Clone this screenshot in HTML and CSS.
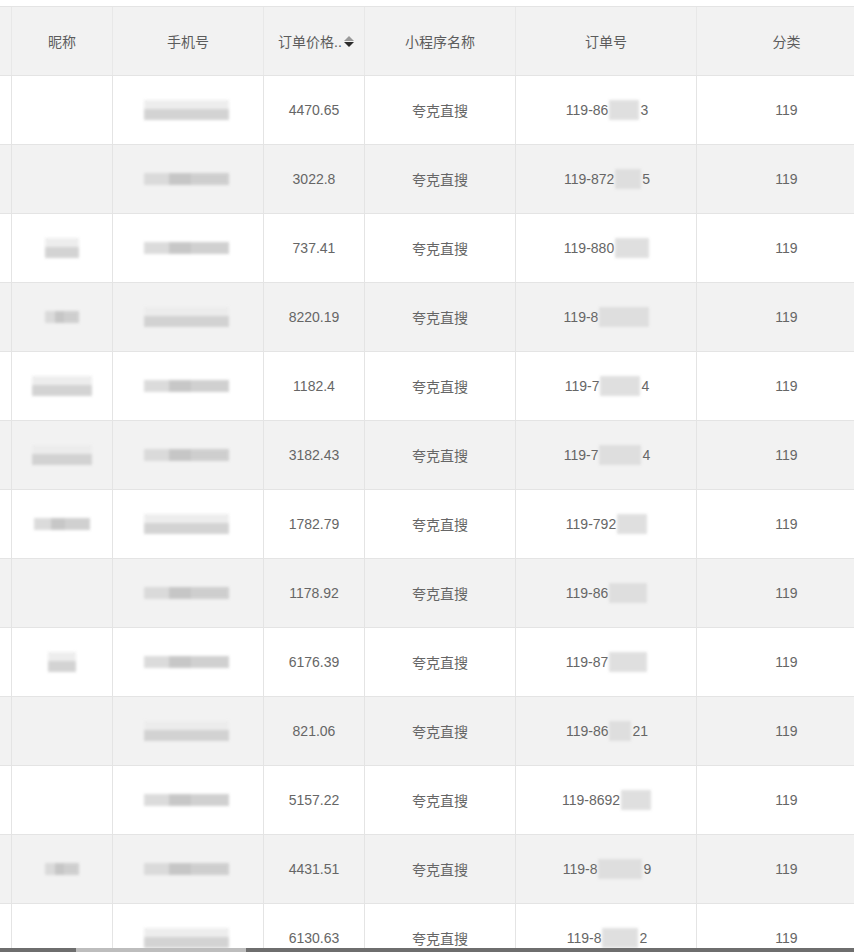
FILE: index.html
```html
<!DOCTYPE html>
<html lang="zh-CN">
<head>
    <meta charset="UTF-8">
    <meta name="viewport" content="width=device-width, initial-scale=1.0">
    <title>订单列表</title>
    <link rel="stylesheet" href="styles.css">
</head>
<body>
    <div class="page">
        <div class="table-wrap">
            <div class="order-table" id="order-table">
                <div class="row head">
                    <div class="cell"></div>
                    <div class="cell">昵称</div>
                    <div class="cell">手机号</div>
                    <div class="cell sortable">
                        <span>订单价格..</span>
                        <span class="sort-icon"><i class="up"></i><i class="down"></i></span>
                    </div>
                    <div class="cell">小程序名称</div>
                    <div class="cell">订单号</div>
                    <div class="cell">分类</div>
                </div>
            </div>
        </div>
        <div class="hscroll"><div class="hscroll-thumb"></div></div>
    </div>

    <script>
        // rows: nickname mask width, price, order prefix, mask width, order suffix
        const orders = [
            { nick: 0,  nickTall: false, price: "4470.65", pre: "119-86",  mask: 30, post: "3" },
            { nick: 0,  nickTall: false, price: "3022.8",  pre: "119-872", mask: 26, post: "5" },
            { nick: 34, nickTall: true,  price: "737.41",  pre: "119-880", mask: 34, post: "" },
            { nick: 34, nickTall: false, price: "8220.19", pre: "119-8",   mask: 50, post: "" },
            { nick: 60, nickTall: true,  price: "1182.4",  pre: "119-7",   mask: 40, post: "4" },
            { nick: 60, nickTall: true,  price: "3182.43", pre: "119-7",   mask: 42, post: "4" },
            { nick: 56, nickTall: false, price: "1782.79", pre: "119-792", mask: 30, post: "" },
            { nick: 0,  nickTall: false, price: "1178.92", pre: "119-86",  mask: 38, post: "" },
            { nick: 28, nickTall: true,  price: "6176.39", pre: "119-87",  mask: 38, post: "" },
            { nick: 0,  nickTall: false, price: "821.06",  pre: "119-86",  mask: 22, post: "21" },
            { nick: 0,  nickTall: false, price: "5157.22", pre: "119-8692",mask: 30, post: "" },
            { nick: 34, nickTall: false, price: "4431.51", pre: "119-8",   mask: 44, post: "9" },
            { nick: 0,  nickTall: false, price: "6130.63", pre: "119-8",   mask: 36, post: "2" }
        ];

        const table = document.getElementById('order-table');

        orders.forEach((o, i) => {
            const row = document.createElement('div');
            row.className = 'row' + (i % 2 === 1 ? ' striped' : '');

            const nickCell = o.nick
                ? `<span class="mask${o.nickTall ? ' tall' : ''}" style="width:${o.nick}px"></span>`
                : '';

            row.innerHTML = `
                <div class="cell"></div>
                <div class="cell">${nickCell}</div>
                <div class="cell"><span class="mask phone${i % 3 === 0 ? ' tall' : ''}"></span></div>
                <div class="cell">${o.price}</div>
                <div class="cell">夸克直搜</div>
                <div class="cell order-no">${o.pre}<span class="mask order" style="width:${o.mask}px"></span>${o.post}</div>
                <div class="cell">119</div>`;
            table.appendChild(row);
        });
    </script>
</body>
</html>
```

FILE: styles.css
```css
:root {
    --text-color: #666666;
    --head-text-color: #5c5c5c;
    --line-color: #e4e4e4;
    --stripe-color: #f2f2f2;
    --head-bg-color: #f2f2f2;
}
html, body { margin: 0; height: 100%; }
body {
    font-family: "Liberation Sans", "Noto Sans CJK SC", sans-serif;
    font-size: 14px;
    color: var(--text-color);
    background-color: #ffffff;
    overflow: hidden;
}
.page { display: flex; flex-direction: column; height: 100vh; }
.table-wrap { flex: 1; overflow: hidden; padding-top: 6px; }
.order-table { margin-left: -48px; width: max-content; border-top: 1px solid var(--line-color); }

.row {
    display: grid;
    grid-template-columns: 60px 101px 151px 101px 151px 181px 180px;
    height: 69px;
    box-sizing: border-box;
    border-bottom: 1px solid var(--line-color);
    background-color: #ffffff;
}
.row.striped { background-color: var(--stripe-color); }
.row.head { height: 69px; background-color: var(--head-bg-color); color: var(--head-text-color); }
.cell {
    display: flex;
    align-items: center;
    justify-content: center;
    border-right: 1px solid var(--line-color);
    white-space: nowrap;
    overflow: hidden;
}
.row.head .cell { border-right-color: #e8e8e8; }

.sortable { gap: 2px; padding-left: 4px; }
.sort-icon { display: inline-flex; flex-direction: column; gap: 1px; margin-top: 1px; }
.sort-icon i { width: 0; height: 0; border-left: 5px solid transparent; border-right: 5px solid transparent; }
.sort-icon .up { border-bottom: 5px solid #9a9a9a; }
.sort-icon .down { border-top: 5px solid #2b2b2b; }

/* blurred private data */
.mask {
    display: inline-block;
    height: 12px;
    background: linear-gradient(90deg, #d8d8d8 0 30%, #c2c2c2 30% 55%, #cbcbcb 55% 100%);
    filter: blur(1.5px);
    opacity: 0.9;
}
.mask.tall { height: 20px; background: linear-gradient(180deg, #ececec 0 45%, #cfcfcf 45% 100%); }
.mask.phone { width: 85px; margin-right: 4px; }
.mask.order { height: 20px; margin: 0 1px; background: #dcdcdc; }
.order-no { padding-left: 2px; }

.hscroll { height: 4px; background-color: #6e6e6e; }
.hscroll-thumb { margin-left: 76px; width: 170px; height: 100%; background-color: #bdbdbd; }
```
